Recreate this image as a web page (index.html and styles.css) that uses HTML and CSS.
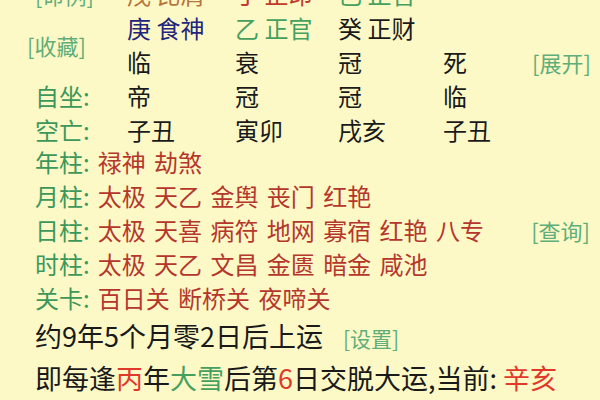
FILE: index.html
```html
<!DOCTYPE html>
<html lang="zh-CN">
<head>
<meta charset="utf-8">
<title>八字</title>
<link rel="stylesheet" href="styles.css">
</head>
<body>
<div class="page">
  <div class="pillars">
    <div class="label link">[命例]</div>
    <div class="cell brown">戊 比肩</div>
    <div class="cell red">丁 正印</div>
    <div class="cell green">己 正官</div>
    <div class="cell"></div>
    <div class="cell"></div>

    <div class="label link fav">[收藏]</div>
    <div class="cell navy">庚 食神</div>
    <div class="cell green">乙 正官</div>
    <div class="cell">癸 正财</div>
    <div class="cell"></div>
    <div class="cell"></div>

    <div class="cell">临</div>
    <div class="cell">衰</div>
    <div class="cell">冠</div>
    <div class="cell">死</div>
    <div class="cell link">[展开]</div>

    <div class="label">自坐:</div>
    <div class="cell">帝</div>
    <div class="cell">冠</div>
    <div class="cell">冠</div>
    <div class="cell">临</div>
    <div class="cell"></div>

    <div class="label">空亡:</div>
    <div class="cell">子丑</div>
    <div class="cell">寅卯</div>
    <div class="cell">戌亥</div>
    <div class="cell">子丑</div>
    <div class="cell"></div>
  </div>

  <div class="shensha">
    <div class="srow"><span class="label">年柱:</span><span class="vals">禄神 劫煞</span></div>
    <div class="srow"><span class="label">月柱:</span><span class="vals">太极 天乙 金舆 丧门 红艳</span></div>
    <div class="srow"><span class="label">日柱:</span><span class="vals">太极 天喜 病符 地网 寡宿 红艳 八专</span><span class="link right">[查询]</span></div>
    <div class="srow"><span class="label">时柱:</span><span class="vals">太极 天乙 文昌 金匮 暗金 咸池</span></div>
    <div class="srow"><span class="label">关卡:</span><span class="vals">百日关 断桥关 夜啼关</span></div>
  </div>

  <div class="luck">
    <div class="lrow">约9年5个月零2日后上运<span class="link small">[设置]</span></div>
    <div class="lrow">即每逢<span class="bred">丙</span>年<span class="green">大雪</span>后第<span class="bred">6</span>日交脱大运,当前: <span class="bred">辛亥</span></div>
  </div>
</div>
</body>
</html>
```

FILE: styles.css
```css
html, body {
  margin: 0;
  padding: 0;
  background: #fcf9c7;
}
body {
  width: 600px;
  height: 400px;
  overflow: hidden;
  font-family: "Noto Sans CJK SC", "Noto Sans", sans-serif;
  color: #1a1a1a;
}
.page {
  padding-left: 35px;
  margin-top: -23px;
}
.pillars {
  display: grid;
  grid-template-columns: 92px 108px 103px 105px 89px auto;
  grid-auto-rows: 34px;
  font-size: 24px;
  line-height: 34px;
}
.label {
  color: #3c985a;
}
.link {
  color: #5fae7a;
  font-size: 22px;
}
.fav {
  grid-row: 2 / span 2;
  align-self: center;
  margin-left: -8px;
}
.cell { white-space: nowrap; }
.brown { color: #b6773c; }
.red { color: #c0392b; }
.green { color: #45a05f; }
.navy { color: #23247e; }

.shensha {
  font-size: 24px;
  line-height: 34px;
  margin-top: -2px;
}
.srow {
  display: flex;
  align-items: baseline;
  gap: 8px;
  white-space: nowrap;
}
.srow .vals {
  color: #b5372c;
  word-spacing: 3px;
}
.srow .right {
  margin-left: auto;
  margin-right: 10px;
}

.luck {
  font-size: 27px;
  line-height: 40px;
  margin-top: 1px;
}
.lrow {
  white-space: nowrap;
}
.small {
  font-size: 21px;
  margin-left: 20px;
}
.bred { color: #e0392c; }
```
